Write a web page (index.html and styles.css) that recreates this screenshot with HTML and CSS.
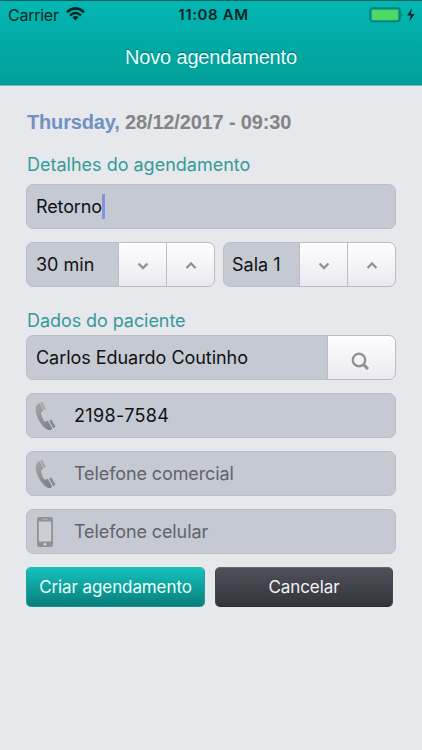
FILE: index.html
```html
<!DOCTYPE html>
<html lang="pt-BR">
<head>
<meta charset="utf-8">
<title>Novo agendamento</title>
<link rel="stylesheet" href="styles.css">
</head>
<body>
<header class="header">
  <div class="status">
    <div class="status-left">
      <span class="carrier">Carrier</span>
      <svg class="wifi" width="19" height="14" viewBox="0 0 19 14" fill="none" stroke="#072524" stroke-width="2.5"><path d="M1 5.2Q9.5-2.4 18 5.2M4 8.5Q9.5 3.4 15 8.5"/><path d="M6.4 10.3Q9.5 7.7 12.6 10.3L9.5 13.4Z" fill="#072524" stroke="none"/></svg>
    </div>
    <span class="clock">11:08 AM</span>
    <div class="status-right">
      <svg width="46" height="16" viewBox="0 0 46 16"><rect x="1" y="1" width="30" height="13.6" rx="2.5" fill="#079a91" stroke="#087d77" stroke-width="1.3"/><rect x="2.8" y="2.7" width="26.4" height="10.2" rx="1" fill="#4cd964"/><path d="M32.5 5.4Q34.6 7.8 32.5 10.2Z" fill="#087d77"/><path d="M43 1.2L38.2 8.4H41.6L40.4 14.4L45.6 6.9H42Z" fill="#072524"/></svg>
    </div>
  </div>
  <h1 class="title"><span>Novo agendamento</span></h1>
</header>
<main class="form">
  <p class="date"><span class="weekday">Thursday,</span> 28/12/2017 - 09:30</p>
  <h2 class="label label-details">Detalhes do agendamento</h2>
  <div class="field"><span class="value retorno">Retorno</span><i class="caret"></i></div>
  <div class="steppers">
    <div class="field stepper duration"><span class="value">30 min</span>
      <span class="step"><svg width="12" height="8" viewBox="0 0 12 8"><path d="M1.5 1.5L6 6L10.5 1.5"/></svg></span>
      <span class="step"><svg width="12" height="8" viewBox="0 0 12 8"><path d="M1.5 6L6 1.5L10.5 6"/></svg></span>
    </div>
    <div class="field stepper room"><span class="value">Sala 1</span>
      <span class="step"><svg width="12" height="8" viewBox="0 0 12 8"><path d="M1.5 1.5L6 6L10.5 1.5"/></svg></span>
      <span class="step"><svg width="12" height="8" viewBox="0 0 12 8"><path d="M1.5 6L6 1.5L10.5 6"/></svg></span>
    </div>
  </div>
  <h2 class="label label-patient">Dados do paciente</h2>
  <div class="field patient"><span class="value name">Carlos Eduardo Coutinho</span>
    <span class="step search"><svg width="20" height="20" viewBox="0 0 20 20"><circle cx="9" cy="9" r="6.2"/><path d="M13.6 13.6L18 18" stroke-width="3"/></svg></span>
  </div>
  <div class="field phone"><svg class="handset" width="22" height="30" viewBox="0 0 22 30"><use href="#handset"/></svg><span class="value number">2198-7584</span></div>
  <div class="field phone"><svg class="handset" width="22" height="30" viewBox="0 0 22 30"><use href="#handset"/></svg><span class="value hint work">Telefone comercial</span></div>
  <div class="field phone"><svg class="handset" width="22" height="32" viewBox="0 0 22 32"><rect x="2" y="1" width="16" height="30" rx="2" fill="#909195"/><rect x="3.8" y="5.5" width="12.4" height="20" fill="#cdced3"/><path d="M7 3.2H13" stroke="#b5b6ba"/><circle cx="10" cy="28.3" r="1.3" fill="#dedfe2"/></svg><span class="value hint mobile">Telefone celular</span></div>
  <div class="actions">
    <button class="button create"><span>Criar agendamento</span></button>
    <button class="button cancel"><span>Cancelar</span></button>
  </div>
</main>
<svg class="symbols" width="0" height="0"><defs>
  <linearGradient id="metal" x1="0" y1="0" x2="1" y2="1"><stop stop-color="#a4a5a9"/><stop offset="1" stop-color="#7d7d81"/></linearGradient>
  <g id="handset"><path d="M4.6 2.1C.5 3.6-.1 8 1.4 13.2C3.3 20.2 7.9 26.1 12.3 28.5C14.2 29.5 16.4 29 17.1 27.4L12.8 19.8C11.6 20 10.6 20.7 9.9 21C7.5 18.2 6.2 14.6 6.1 11.2L8.3 9.4Z" fill="url(#metal)"/><path d="M6.2 1.3L10 8.6" stroke="#a4a5a9" stroke-width="2.2"/><path d="M15.3 19.2L19.4 26.5" stroke="#8a8a8e" stroke-width="2.6"/></g>
</defs></svg>
</body>
</html>
```
FILE: styles.css
```css
* { box-sizing: border-box; }
body { margin: 0; height: 750px; overflow: hidden; background: #e7e8ec; font-family: Inter, "Liberation Sans", sans-serif; color: #101113; }
.header { height: 86px; border-top: 1px solid #07605e; border-bottom: 1px solid #7fb9b8; background: linear-gradient(#02b7b3, #029e99); }
.status { display: grid; grid-template-columns: 1fr auto 1fr; height: 27px; align-items: center; padding: 0 7px 0 8px; color: #072524; }
.status-left { display: flex; align-items: center; gap: 7px; }
.carrier { font-size: 16px; letter-spacing: -.25px; }
.wifi { margin-top: -1px; }
.clock { font-size: 15px; font-weight: 600; letter-spacing: .6px; margin-left: 4px; }
.status-right { display: flex; justify-content: flex-end; }
.title { margin: 0; height: 57px; display: flex; align-items: center; justify-content: center; color: #e9fffd; font: 20px/1 "Liberation Sans", sans-serif; letter-spacing: -.17px; text-shadow: 0 -1px 1px #006d69; }
.form { padding: 23px 26px 0; }
.date { margin: 0; height: 26px; font: bold 20px/26px "Liberation Sans", sans-serif; letter-spacing: -.16px; color: #838486; padding-left: 1px; white-space: nowrap; }
.weekday { color: #7190c3; }
.label { margin: 0; padding-left: 1px; font-size: 18px; font-weight: 400; line-height: 24px; height: 24px; color: #359b98; white-space: nowrap; }
.label-details { margin-top: 18px; margin-bottom: 7px; }
.label-patient { margin-top: 22px; margin-bottom: 2px; letter-spacing: -.07px; }
.field { width: 370px; height: 45px; border: 1px solid #bbbdc6; border-radius: 7px; background: #c5c9d2; display: flex; align-items: center; padding-left: 9px; }
.value { font-size: 18px; line-height: 24px; white-space: nowrap; }
.retorno { letter-spacing: -.12px; }
.name { letter-spacing: -.04px; }
.number { letter-spacing: .35px; }
.work, .mobile { letter-spacing: -.1px; }
.caret { width: 3px; height: 25px; background: #8494dc; }
.steppers { display: flex; gap: 8px; margin-top: 13px; }
.stepper, .patient { overflow: hidden; }
.stepper .value, .patient .value { flex: 1; }
.duration { width: 189px; }
.room { width: 173px; }
.room .value { margin-left: -1px; }
.step { width: 48px; height: 43px; border-left: 1px solid #bbbcc4; background: linear-gradient(#fefeff, #eae9f0); display: flex; align-items: center; justify-content: center; padding-top: 3px; }
.step svg { fill: none; stroke: #919197; stroke-width: 2.4; }
.search { width: 68px; padding: 6px 3px 0 0; }
.phone { margin-top: 13px; padding-left: 8px; }
.handset { margin-right: 17px; }
.hint { color: #626469; }
.actions { display: flex; gap: 10px; margin-top: 13px; }
.button { height: 40px; padding: 0; border: 1px solid; border-radius: 5px; font: 17px/24px Inter, sans-serif; letter-spacing: -.1px; color: #eafffb; }
.create { width: 179px; background: linear-gradient(#15c2bd, #087e7b); border-color: #27b9b3 #1aa29d #16918d; }
.cancel { width: 178px; background: linear-gradient(#50505a, #34343b); border-color: #65656d #45454d #2c2c33; color: #f2f2f5; }
.symbols { position: absolute; }
```
